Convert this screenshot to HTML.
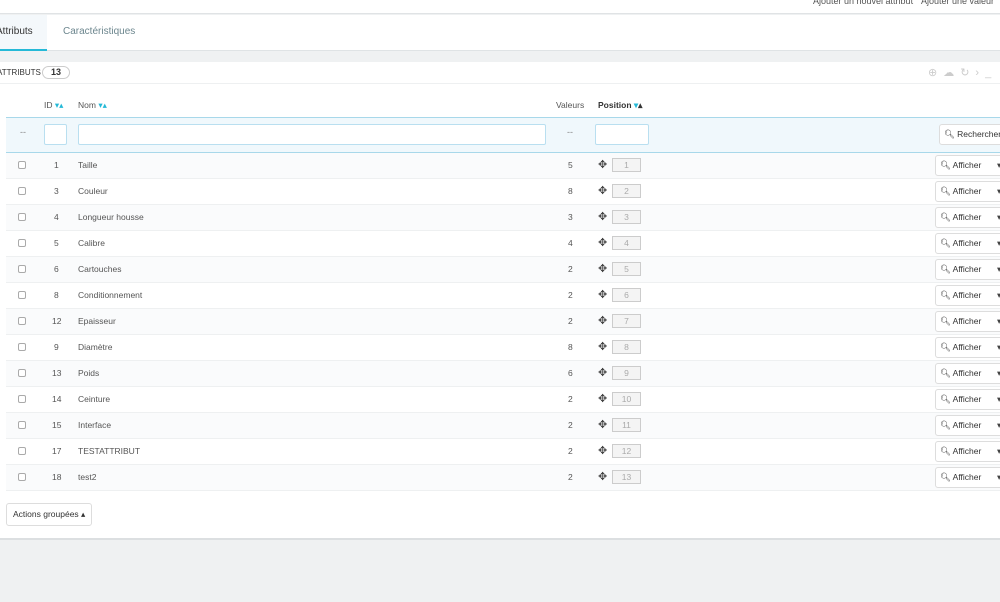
<!DOCTYPE html>
<html><head><meta charset="utf-8"><style>
*{box-sizing:border-box;margin:0;padding:0}
body{width:1000px;height:602px;background:#eff1f2;font-family:"Liberation Sans",sans-serif;font-size:9px;color:#555;overflow:hidden;position:relative}
.top{position:absolute;left:0;top:0;width:1000px;height:14px;background:#fff;border-bottom:1px solid #e0e3e5}
.top span{position:absolute;top:-4px;font-size:9px;color:#555}
.tabs{position:absolute;left:0;top:15px;width:1000px;height:36px;background:#fff;border-bottom:1px solid #dfe3e5}
.tab{position:absolute;top:0;height:36px;line-height:34px;font-size:10px;white-space:nowrap}
.panel{position:absolute;left:0;top:62px;width:1000px;height:478px;background:#fff;border-bottom:2px solid #dcdfe1}
.ph{position:absolute;left:0;top:0;width:1000px;height:22px;border-bottom:1px solid #eef0f1}
.badge{position:absolute;left:42px;top:4px;width:28px;height:13px;border:1px solid #ccc;border-radius:7px;text-align:center;font-weight:bold;font-size:9px;line-height:11px;color:#333;background:#fff}
.th{position:absolute;top:38px;font-size:8.5px;color:#555;white-space:nowrap}
.up{color:#25b9d7}
.filter{position:absolute;left:6px;top:55px;width:994px;height:36px;background:#f0f8fc;border-top:1px solid #a8d8ea;border-bottom:1px solid #a8d8ea}
.inp{position:absolute;top:6px;height:21px;background:#fff;border:1px solid #b9dff0;border-radius:2px}
.row{position:absolute;left:6px;width:994px;height:26px;border-bottom:1px solid #eef0f1;font-size:8.5px;color:#555}
.row.o{background:#fafbfc}
.row span{position:absolute;top:7px}
.cb{position:absolute;left:12px;top:8px;width:8px;height:8px;border:1px solid #aaa;border-radius:2px;background:#fff}
.pos{position:absolute;left:606px;top:5px;width:29px;height:14px;border:1px solid #ccc;background:#f4f4f4;text-align:center;color:#aaa;line-height:12px}
.btn{position:absolute;left:929px;top:2px;width:71px;height:21px;border:1px solid #ddd;border-radius:3px;background:#fff;font-size:8.5px;line-height:19px;padding-left:4px;color:#333;white-space:nowrap}
</style></head><body>
<div class="top"><span style="left:813px">Ajouter un nouvel attribut</span><span style="left:921px">Ajouter une valeur</span></div>
<div class="tabs">
<div class="tab" style="left:0;width:47px;background:#f4f8fb;border-bottom:2px solid #25b9d7;color:#333;text-indent:-4px">Attributs</div>
<div class="tab" style="left:63px;color:#6c868e">Caractéristiques</div>
</div>
<div class="panel">
<div class="ph"><span style="position:absolute;left:-3px;top:6px;font-size:8px;color:#333;white-space:nowrap">ATTRIBUTS</span><div class="badge">13</div>
<span style="position:absolute;left:928px;top:4px;color:#ccc;font-size:11px;letter-spacing:6px">⊕☁↻›_</span></div>
<div class="th" style="left:44px">ID <span class="up">▾▴</span></div>
<div class="th" style="left:78px">Nom <span class="up">▾</span><span class="up">▴</span></div>
<div class="th" style="left:556px">Valeurs</div>
<div class="th" style="left:598px;font-weight:bold;color:#333">Position <span class="up">▾</span>▴</div>
<div class="filter">
<span style="position:absolute;left:14px;top:9px;color:#888">--</span>
<div class="inp" style="left:38px;width:23px"></div>
<div class="inp" style="left:72px;width:468px"></div>
<span style="position:absolute;left:561px;top:9px;color:#888">--</span>
<div class="inp" style="left:589px;width:54px"></div>
<div class="btn" style="left:933px;top:6px;width:66px;color:#333">&#x1F50D;&#xFE0E; Rechercher</div>
</div>
</div>
<div id="rows"></div>
<div style="position:absolute;left:6px;top:503px;width:86px;height:23px;border:1px solid #ddd;border-radius:3px;background:#fff;font-size:8.5px;line-height:21px;padding-left:6px;color:#333">Actions groupées ▴</div>
<script>
var d=[[1,"Taille",5],[3,"Couleur",8],[4,"Longueur housse",3],[5,"Calibre",4],[6,"Cartouches",2],[8,"Conditionnement",2],[12,"Epaisseur",2],[9,"Diamètre",8],[13,"Poids",6],[14,"Ceinture",2],[15,"Interface",2],[17,"TESTATTRIBUT",2],[18,"test2",2]];
var h="";d.forEach(function(r,i){var t=153+i*26;
h+='<div class="row'+(i%2==0?' o':'')+'" style="top:'+t+'px"><div class="cb"></div><span style="left:'+(r[0]>9?46:48)+'px">'+r[0]+'</span><span style="left:72px">'+r[1]+'</span><span style="left:562px">'+r[2]+'</span><span style="left:592px;top:5px;font-size:11px;color:#444">✥</span><div class="pos">'+(i+1)+'</div><div class="btn">&#x1F50D;&#xFE0E; Afficher<span style="position:absolute;left:61px;top:0;color:#444">▾</span></div></div>';});
document.getElementById("rows").innerHTML=h;
</script>
</body></html>
